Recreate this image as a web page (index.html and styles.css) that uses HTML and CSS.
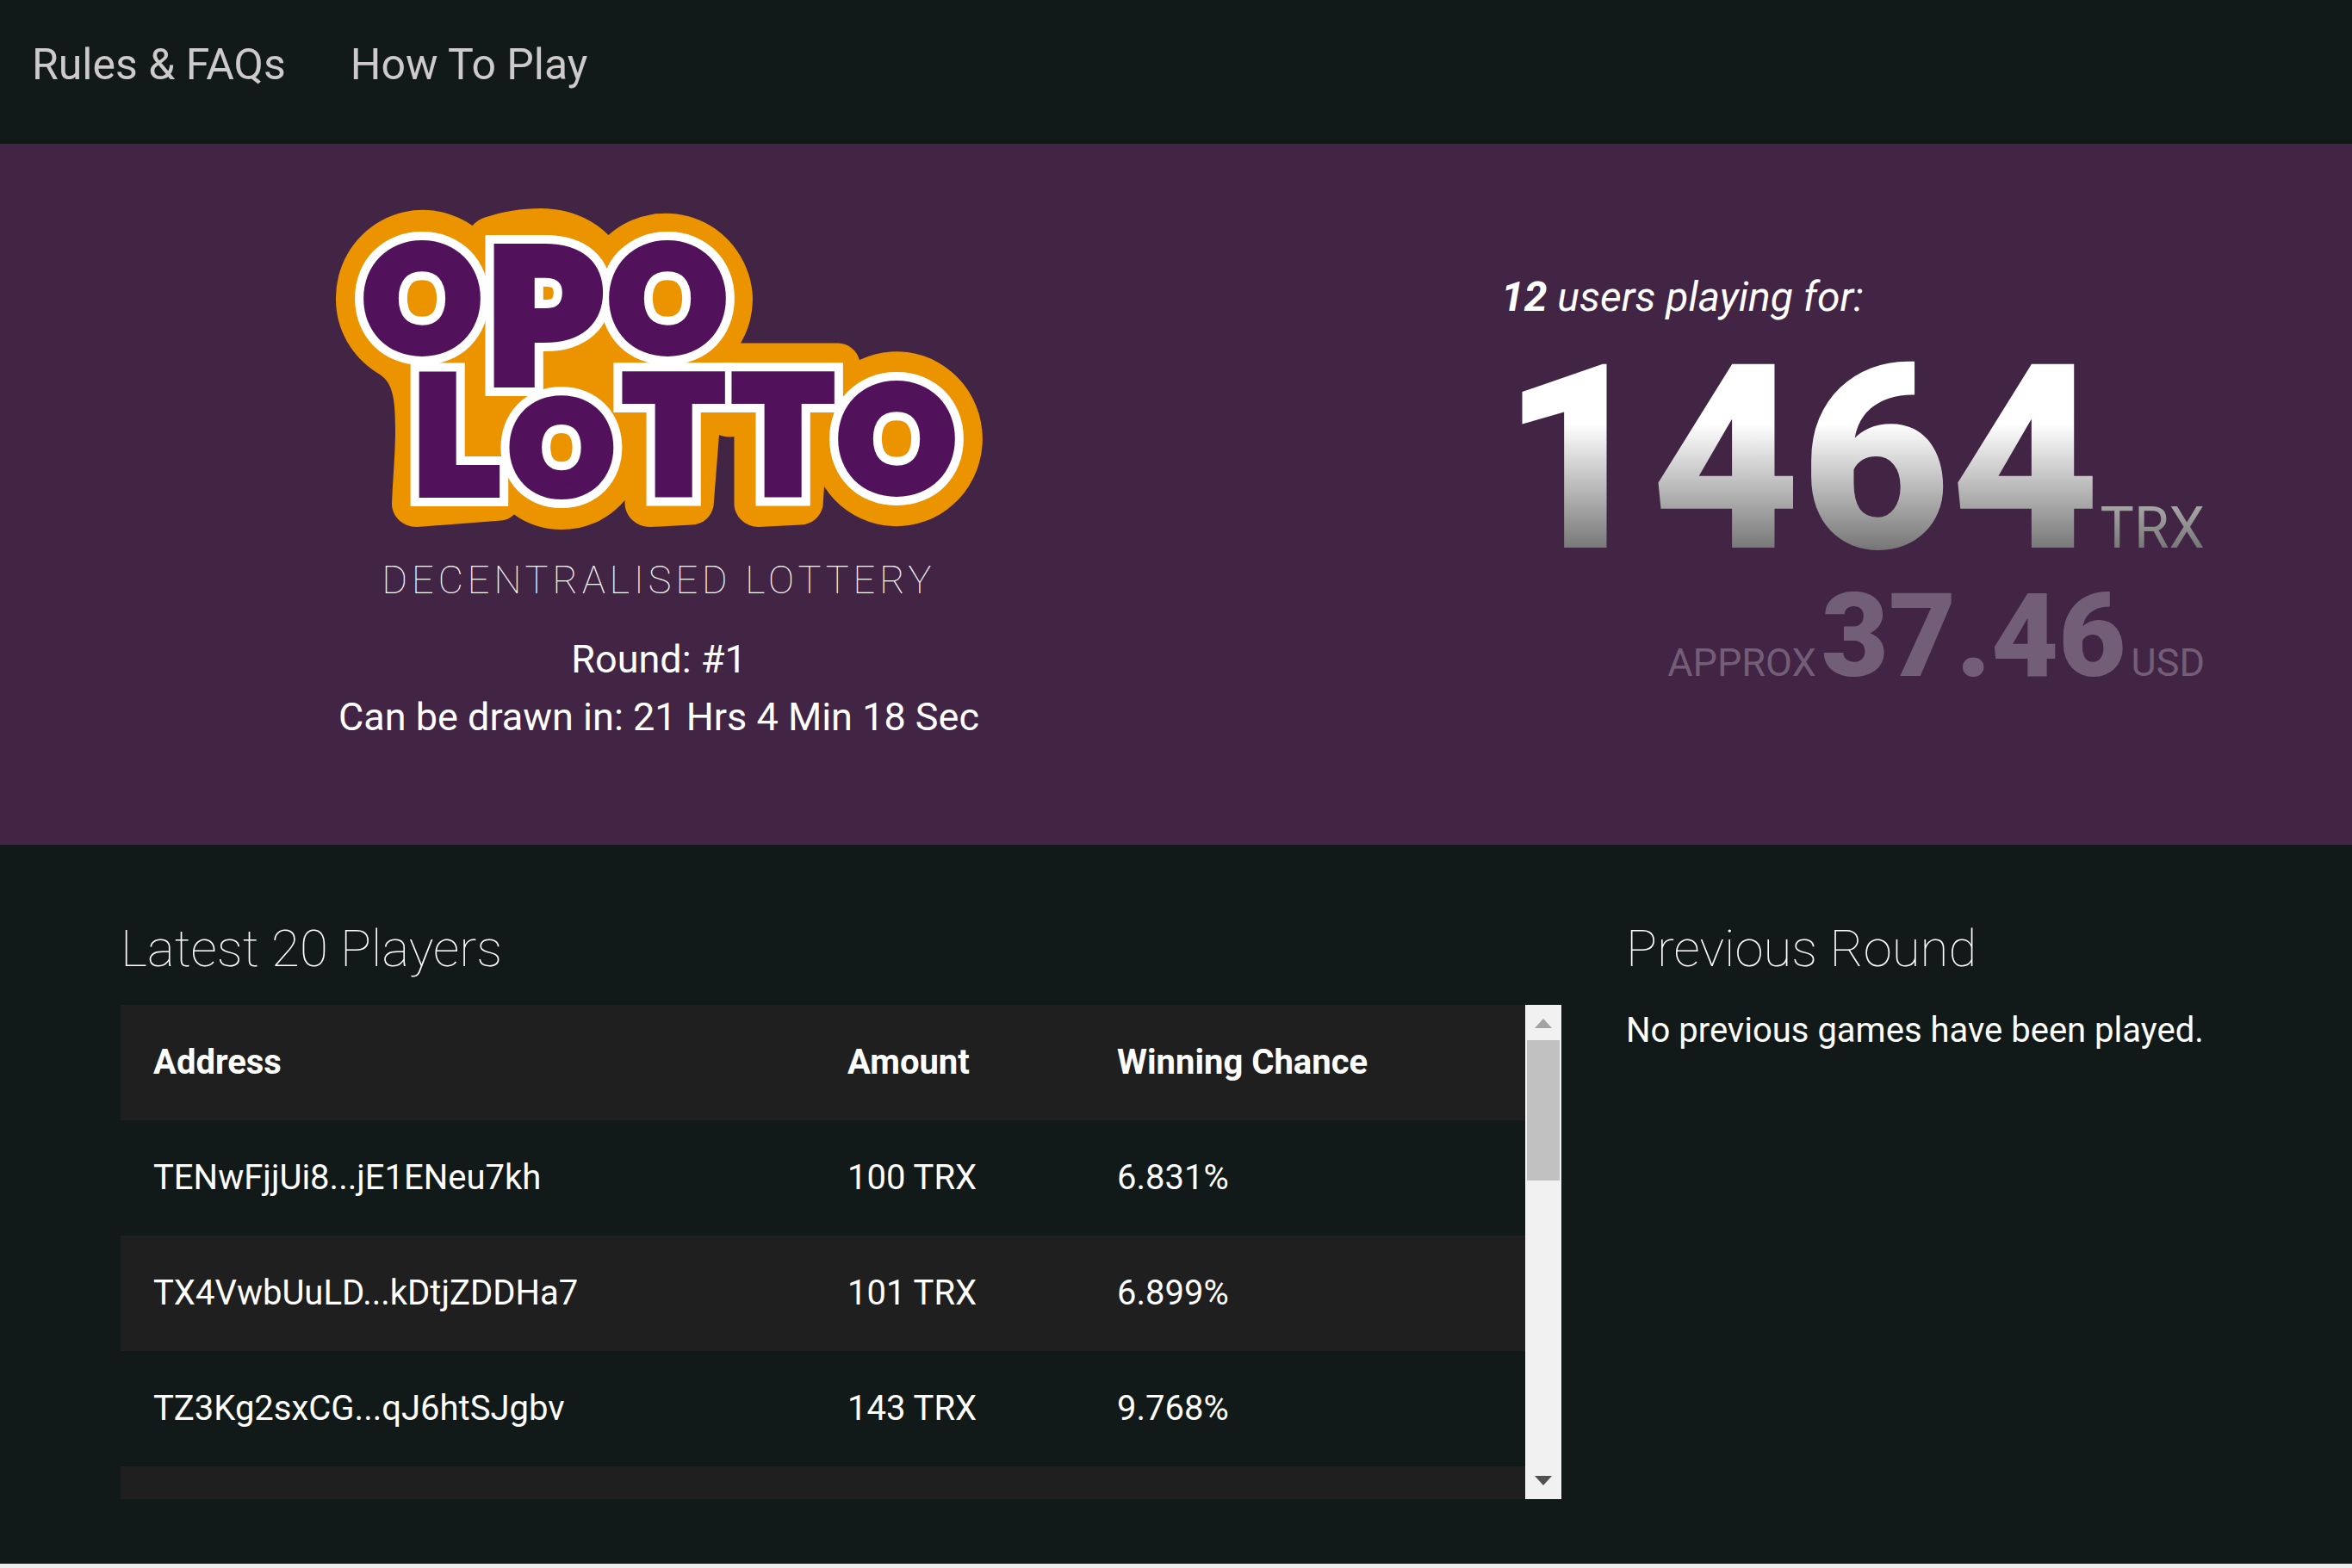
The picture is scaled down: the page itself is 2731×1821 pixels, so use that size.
FILE: index.html
```html
<!DOCTYPE html>
<html lang="en">
<head>
<meta charset="utf-8">
<meta name="viewport" content="width=device-width, initial-scale=1">
<title>Opo Lotto</title>
<link rel="stylesheet" href="styles.css">
</head>
<body>
<nav class="nav">
  <a href="#rules">Rules &amp; FAQs</a>
  <a href="#how">How To Play</a>
</nav>

<header class="hero">
  <div class="brand">
    <svg class="logo" viewBox="390 242 750 373" role="img" aria-label="Opo Lotto">
      <path class="logo-back" d="M390 348A101 102 0 0 1 548.500 262C553 257 558 254 563 252.500C583 246 606 242 628 242C658 242 687 253 706.500 273A101 102 0 0 1 874 346C874 365 869 384 860 398.500H973C985 398.500 995 407 998 418A100 101.500 0 1 1 957 565L955.500 588C953 600 943 609 930 609.500L881 612C866 612 853 600 852.500 586V507C846 508 839 507 835 505L828.500 588C826 600 817 609 803 609.500L755 612C739 612 726 600 725.500 585V581C706 604 680 615 652 615C632 615 612 609 597 597.500C592 602 588 604 582 604.500L484 612C468 612 455 600 455 585C456 556 459 528 459 500C459 461 456 443 438 433C408 414 390 382 390 348Z"/>
      <use class="logo-white" href="#letters"/>
      <g class="logo-purple">
        <g id="letters">
          <text class="o" x="490" y="405">O</text>
          <text class="p" x="631" y="442">P</text>
          <text class="o" x="775" y="405">O</text>
          <text class="l" x="528" y="570">L</text>
          <text class="s" x="652" y="571">O</text>
          <text class="l" x="782" y="570">T</text>
          <text class="l" x="909" y="570">T</text>
          <text class="o" x="1041" y="568">O</text>
        </g>
      </g>
    </svg>
    <p class="tagline">DECENTRALISED LOTTERY</p>
    <p class="round">Round: #1<br>Can be drawn in: 21 Hrs 4 Min 18 Sec</p>
  </div>
  <div class="jackpot">
    <p class="users"><strong>12</strong> users playing for:</p>
    <p class="pot">1464<span>TRX</span></p>
    <p class="usd"><span>APPROX</span>37.46<span>USD</span></p>
  </div>
</header>

<main class="main">
  <section>
    <h2>Latest 20 Players</h2>
    <div class="scroller">
      <div class="viewport">
        <table class="players">
          <colgroup><col class="c-address"><col class="c-amount"><col></colgroup>
          <thead><tr><th>Address</th><th>Amount</th><th>Winning Chance</th></tr></thead>
          <tbody>
            <tr><td>TENwFjjUi8...jE1ENeu7kh</td><td>100 TRX</td><td>6.831%</td></tr>
            <tr><td>TX4VwbUuLD...kDtjZDDHa7</td><td>101 TRX</td><td>6.899%</td></tr>
            <tr><td>TZ3Kg2sxCG...qJ6htSJgbv</td><td>143 TRX</td><td>9.768%</td></tr>
            <tr><td></td><td></td><td></td></tr>
          </tbody>
        </table>
      </div>
      <div class="scrollbar" aria-hidden="true">
        <svg viewBox="0 0 42 41"><path fill="#a3a3a3" d="M11 27 21 16 31 27Z"/></svg>
        <div class="thumb"></div>
        <svg class="down" viewBox="0 0 42 41"><path fill="#505050" d="M11 14H31L21 25Z"/></svg>
      </div>
    </div>
  </section>
  <section>
    <h2>Previous Round</h2>
    <p class="note">No previous games have been played.</p>
  </section>
</main>
<footer class="footer"></footer>
</body>
</html>
```

FILE: styles.css
```css
* { box-sizing: border-box; }

body {
  margin: 0;
  min-height: 100vh;
  display: flex;
  flex-direction: column;
  background: #111a18;
  color: #fff;
  font-family: Roboto, "Liberation Sans", sans-serif;
  font-size: 40px;
  line-height: 60px;
}

p, h2 { margin: 0; }

.nav {
  display: flex;
  gap: 75px;
  padding: 37px 37px 54px;
  font-size: 50px;
  line-height: 76px;
}
.nav a { color: #cccaca; text-decoration: none; }

.hero {
  display: grid;
  grid-template-columns: 1250fr 1201fr;
  padding: 75px 140px 115px;
  background: #422445;
}
.brand {
  display: flex;
  flex-direction: column;
  align-items: center;
  gap: 25px;
  text-align: center;
}
.logo { width: 750px; max-width: 100%; height: auto; overflow: visible; }
.logo-back { fill: #eb9400; }
.logo text {
  font-family: Lato, sans-serif;
  font-weight: 900;
  text-anchor: middle;
}
.logo-white { fill: #fff; stroke: #fff; stroke-width: 36px; }
.logo-purple { fill: #52115b; stroke: #52115b; stroke-width: 16px; }
.logo .o { font-size: 161px; }
.logo .p { font-size: 208px; }
.logo .l { font-size: 180px; }
.logo .s { font-size: 141px; }

.tagline {
  font-size: 45px;
  line-height: 67px;
  font-weight: 100;
  letter-spacing: 5px;
}
.round { font-size: 45px; line-height: 67px; }

.jackpot {
  justify-self: end;
  width: fit-content;
  padding: 67px 31px 0 0;
}
.users {
  margin-bottom: 13px;
  font-size: 48px;
  line-height: 72px;
  font-style: italic;
}
.pot {
  font-size: 300px;
  line-height: 280px;
  font-weight: 900;
  color: transparent;
  background: linear-gradient(#fff 35%, #555);
  -webkit-background-clip: text;
  background-clip: text;
}
.pot span { font-size: 66px; line-height: 1; font-weight: 400; }
.usd {
  padding-top: 5px;
  font-size: 135px;
  line-height: 120px;
  font-weight: 900;
  text-align: right;
  color: #735e77;
}
.usd span { font-size: 45px; line-height: 1; font-weight: 400; }
.usd span:first-child { margin-right: 6px; }
.usd span:last-child { margin-left: 6px; }

.main {
  display: grid;
  grid-template-columns: 1673fr 703fr;
  gap: 75px;
  padding: 85px 140px 75px;
}
h2 {
  margin-bottom: 29px;
  font-size: 60px;
  line-height: 72px;
  font-weight: 100;
}

.scroller { display: flex; height: 574px; }
.viewport { flex: 1; overflow: hidden; }
.players {
  width: 100%;
  table-layout: fixed;
  border-collapse: collapse;
  text-align: left;
}
.c-address { width: 806px; }
.c-amount { width: 313px; }
.players th, .players td { height: 134px; padding: 0 38px; }
.players th { font-weight: 700; }
.players thead tr, .players tbody tr:nth-child(even) { background: #201f1f; }

.scrollbar {
  display: flex;
  flex-direction: column;
  width: 42px;
  background: #f1f1f1;
}
.thumb { height: 163px; margin: 0 2px; background: #c1c1c1; }
.down { margin-top: auto; }

.footer { flex: 1; background: #eee; }
```
